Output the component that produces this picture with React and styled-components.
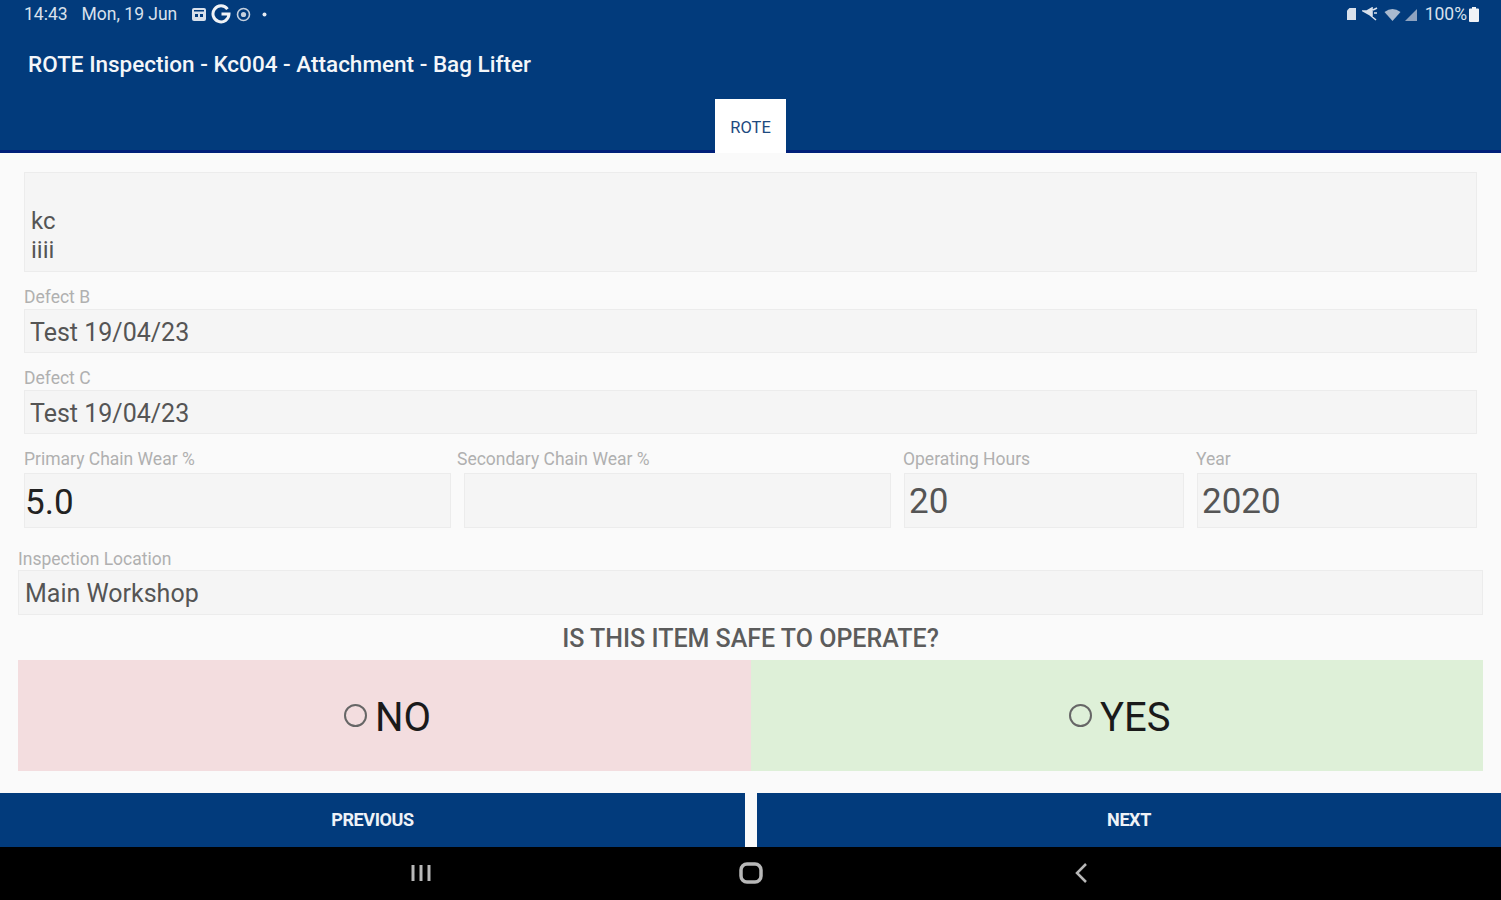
import styled, { createGlobalStyle } from 'styled-components';

const GlobalStyle = createGlobalStyle`
  html, body { margin: 0; padding: 0; background: #fafafa; }
  * { box-sizing: border-box; }
  body { font-family: Roboto, "Liberation Sans", sans-serif; }
`;

const Page = styled.div`
  width: 1501px;
  height: 900px;
  overflow: hidden;
  display: flex;
  flex-direction: column;
  background: #fafafa;
`;

const Header = styled.header`
  height: 153px;
  background: #023b7c;
  border-bottom: 3px solid #00207a;
  display: flex;
  flex-direction: column;
`;

const StatusBar = styled.div`
  flex: none;
  height: 28px;
  padding: 0 22px 0 24px;
  display: flex;
  align-items: center;
  justify-content: space-between;
  color: #d9e1ec;
  font-size: 17.5px;
`;

const StatusGroup = styled.div`
  display: flex;
  align-items: center;
`;

const Clock = styled.span`
  margin-right: 14px;
`;

const DateText = styled.span`
  margin-right: 14px;
`;

const Title = styled.h1`
  flex: none;
  margin: 21px 0 0 28px;
  height: 30px;
  line-height: 30px;
  font-size: 22.5px;
  font-weight: 500;
  color: #f4f6f9;
`;

const TabRow = styled.div`
  flex: none;
  margin-top: 20px;
  display: flex;
  justify-content: center;
`;

const Tab = styled.div`
  width: 71px;
  height: 54px;
  padding-top: 2px;
  background: #fff;
  color: #1d4a80;
  font-size: 16.5px;
  display: flex;
  align-items: center;
  justify-content: center;
`;

const Form = styled.main`
  flex: 1;
  padding: 19px 18px 0;
  display: flex;
  flex-direction: column;
`;

const Inset = styled.div`
  padding: 0 6px;
  display: flex;
  flex-direction: column;
`;

const Field = styled.div`
  background: #f5f5f5;
  border: 1px solid #ececec;
  height: ${p => p.$h}px;
  padding-left: ${p => p.$pad ?? 5}px;
  padding-top: ${p => p.$dark ? 3 : 2}px;
  display: flex;
  align-items: center;
  color: ${p => p.$dark ? '#222' : '#555'};
  font-size: ${p => p.$size || 25}px;
`;

const NotesField = styled(Field)`
  display: block;
  padding-left: 6px;
  padding-top: 34px;
  line-height: 29px;
  font-size: 24px;
`;

const Label = styled.label`
  display: block;
  height: ${p => p.$h || 37}px;
  padding-top: ${p => p.$top || 17}px;
  margin-left: ${p => p.$shift || 0}px;
  line-height: 16px;
  color: #b0b0b0;
  font-size: 17.5px;
  white-space: nowrap;
`;

const MeasureRow = styled.div`
  display: grid;
  grid-template-columns: 427px 427px 280px 1fr;
  column-gap: 13px;
`;

const Question = styled.h2`
  margin: 6px 0 3px;
  height: 36px;
  line-height: 36px;
  text-align: center;
  font-size: 25px;
  font-weight: 500;
  color: #5c5c5c;
`;

const Choices = styled.div`
  height: 111px;
  display: grid;
  grid-template-columns: 733px 732px;
`;

const Choice = styled.div`
  background: ${p => p.$bg};
  display: flex;
  align-items: center;
  padding-left: ${p => p.$left}px;
  padding-top: 3px;
  gap: 8px;
  color: #1a1a1a;
  font-size: 40px;
`;

const Radio = styled.span`
  width: 23px;
  height: 23px;
  border: 2px solid #666;
  border-radius: 50%;
  margin-top: -4px;
`;

const Footer = styled.div`
  height: 54px;
  display: grid;
  grid-template-columns: 745px 744px;
  column-gap: 12px;
`;

const NavButton = styled.button`
  border: 0;
  padding: 0 0 2px;
  background: #023b7c;
  color: #eef2f7;
  font-family: inherit;
  font-size: 18px;
  font-weight: 700;
  letter-spacing: -0.4px;
`;

const SystemBar = styled.nav`
  height: 53px;
  padding-bottom: 2px;
  background: #000;
  display: grid;
  grid-template-columns: repeat(3, 330px);
  justify-content: center;
  align-items: center;
  justify-items: center;
  color: #b8b8b8;
`;

const CalendarIcon = () => (
  <svg width="16" height="16" viewBox="0 0 16 16" style={{ marginRight: 4 }}>
    <rect x="1" y="2" width="14" height="13" rx="2" fill="#d9e1ec" />
    <rect x="4" y="8" width="3" height="3" fill="#023b7c" />
    <rect x="9" y="8" width="3" height="3" fill="#023b7c" />
    <rect x="3" y="4" width="10" height="1.5" fill="#023b7c" />
  </svg>
);

const GoogleIcon = () => (
  <svg width="20" height="20" viewBox="0 0 20 20" style={{ marginRight: 5 }}>
    <path d="M16.5 5.2A8 8 0 1 0 18 10h-7.5" fill="none" stroke="#f0f3f7" strokeWidth="3" />
  </svg>
);

const CircleIcon = () => (
  <svg width="15" height="15" viewBox="0 0 15 15" style={{ marginRight: 11 }}>
    <circle cx="7.5" cy="7.5" r="6" fill="none" stroke="#c5d0de" strokeWidth="1.6" />
    <circle cx="7.5" cy="7.5" r="2.6" fill="#c5d0de" />
  </svg>
);

const DotIcon = () => (
  <svg width="5" height="5" viewBox="0 0 5 5">
    <circle cx="2.5" cy="2.5" r="2" fill="#e6ebf2" />
  </svg>
);

const AlarmIcon = () => (
  <svg width="13" height="14" viewBox="0 0 13 14" style={{ marginRight: 4 }}>
    <path d="M2 13V3.5L4.5 1h6.5v12z" fill="#d9e1ec" />
  </svg>
);

const MuteIcon = () => (
  <svg width="16" height="14" viewBox="0 0 16 14" style={{ marginRight: 6 }}>
    <path d="M1 4h4l5-3v8L1 4zM8 8l6 5M11 3l4-2M12 6h3" fill="#d9e1ec" stroke="#d9e1ec" strokeWidth="1.6" />
  </svg>
);

const WifiIcon = () => (
  <svg width="17" height="13" viewBox="0 0 17 13" style={{ marginRight: 3 }}>
    <path d="M0.5 4Q8.5 -2 16.5 4L8.5 13z" fill="#a9b9cf" />
  </svg>
);

const SignalIcon = () => (
  <svg width="14" height="13" viewBox="0 0 14 13" style={{ marginRight: 7 }}>
    <path d="M13 1v12H1z" fill="#8ea3c0" />
  </svg>
);

const BatteryIcon = () => (
  <svg width="10" height="15" viewBox="0 0 10 15" style={{ marginLeft: 2 }}>
    <path d="M3 0h4v1.500h2a1 1 0 0 1 1 1V14a1 1 0 0 1-1 1H1a1 1 0 0 1-1-1V2.500a1 1 0 0 1 1-1h2z" fill="#f0f3f7" />
  </svg>
);

const RecentsIcon = () => (
  <svg width="20" height="20" viewBox="0 0 20 20">
    <path d="M2 2v16M10 2v16M18 2v16" fill="none" stroke="currentColor" strokeWidth="3" />
  </svg>
);

const HomeIcon = () => (
  <svg width="24" height="22" viewBox="0 0 24 22">
    <rect x="2" y="2" width="20" height="18" rx="6" fill="none" stroke="currentColor" strokeWidth="3.500" />
  </svg>
);

const BackIcon = () => (
  <svg width="14" height="22" viewBox="0 0 14 22">
    <path d="M12 2L3 11l9 9" fill="none" stroke="currentColor" strokeWidth="2.500" />
  </svg>
);

const App = () => {
  return (
    <Page>
      <GlobalStyle />
      <Header>
        <StatusBar>
          <StatusGroup>
            <Clock>14:43</Clock>
            <DateText>Mon, 19 Jun</DateText>
            <CalendarIcon />
            <GoogleIcon />
            <CircleIcon />
            <DotIcon />
          </StatusGroup>
          <StatusGroup>
            <AlarmIcon />
            <MuteIcon />
            <WifiIcon />
            <SignalIcon />
            <span>100%</span>
            <BatteryIcon />
          </StatusGroup>
        </StatusBar>
        <Title>ROTE Inspection - Kc004 - Attachment - Bag Lifter</Title>
        <TabRow>
          <Tab>ROTE</Tab>
        </TabRow>
      </Header>
      <Form>
        <Inset>
          <NotesField $h={100}>
            kc
            <br />
            iiii
          </NotesField>
          <Label>Defect B</Label>
          <Field $h={44}>Test 19/04/23</Field>
          <Label>Defect C</Label>
          <Field $h={44}>Test 19/04/23</Field>
          <MeasureRow>
            <div>
              <Label $h={39}>Primary Chain Wear %</Label>
              <Field $h={55} $size={35} $pad={0} $dark>5.0</Field>
            </div>
            <div>
              <Label $h={39} $shift={-7}>Secondary Chain Wear %</Label>
              <Field $h={55} $size={35} />
            </div>
            <div>
              <Label $h={39} $shift={-1}>Operating Hours</Label>
              <Field $h={55} $size={35} $pad={4}>20</Field>
            </div>
            <div>
              <Label $h={39} $shift={-1}>Year</Label>
              <Field $h={55} $size={35} $pad={4}>2020</Field>
            </div>
          </MeasureRow>
        </Inset>
        <Label $h={42} $top={23}>Inspection Location</Label>
        <Field $h={45} $pad={6}>Main Workshop</Field>
        <Question>IS THIS ITEM SAFE TO OPERATE?</Question>
        <Choices>
          <Choice $bg="#f3dddf" $left={326}>
            <Radio />
            NO
          </Choice>
          <Choice $bg="#def0d8" $left={318}>
            <Radio />
            YES
          </Choice>
        </Choices>
      </Form>
      <Footer>
        <NavButton>PREVIOUS</NavButton>
        <NavButton>NEXT</NavButton>
      </Footer>
      <SystemBar>
        <RecentsIcon />
        <HomeIcon />
        <BackIcon />
      </SystemBar>
    </Page>
  );
};

export default App;
